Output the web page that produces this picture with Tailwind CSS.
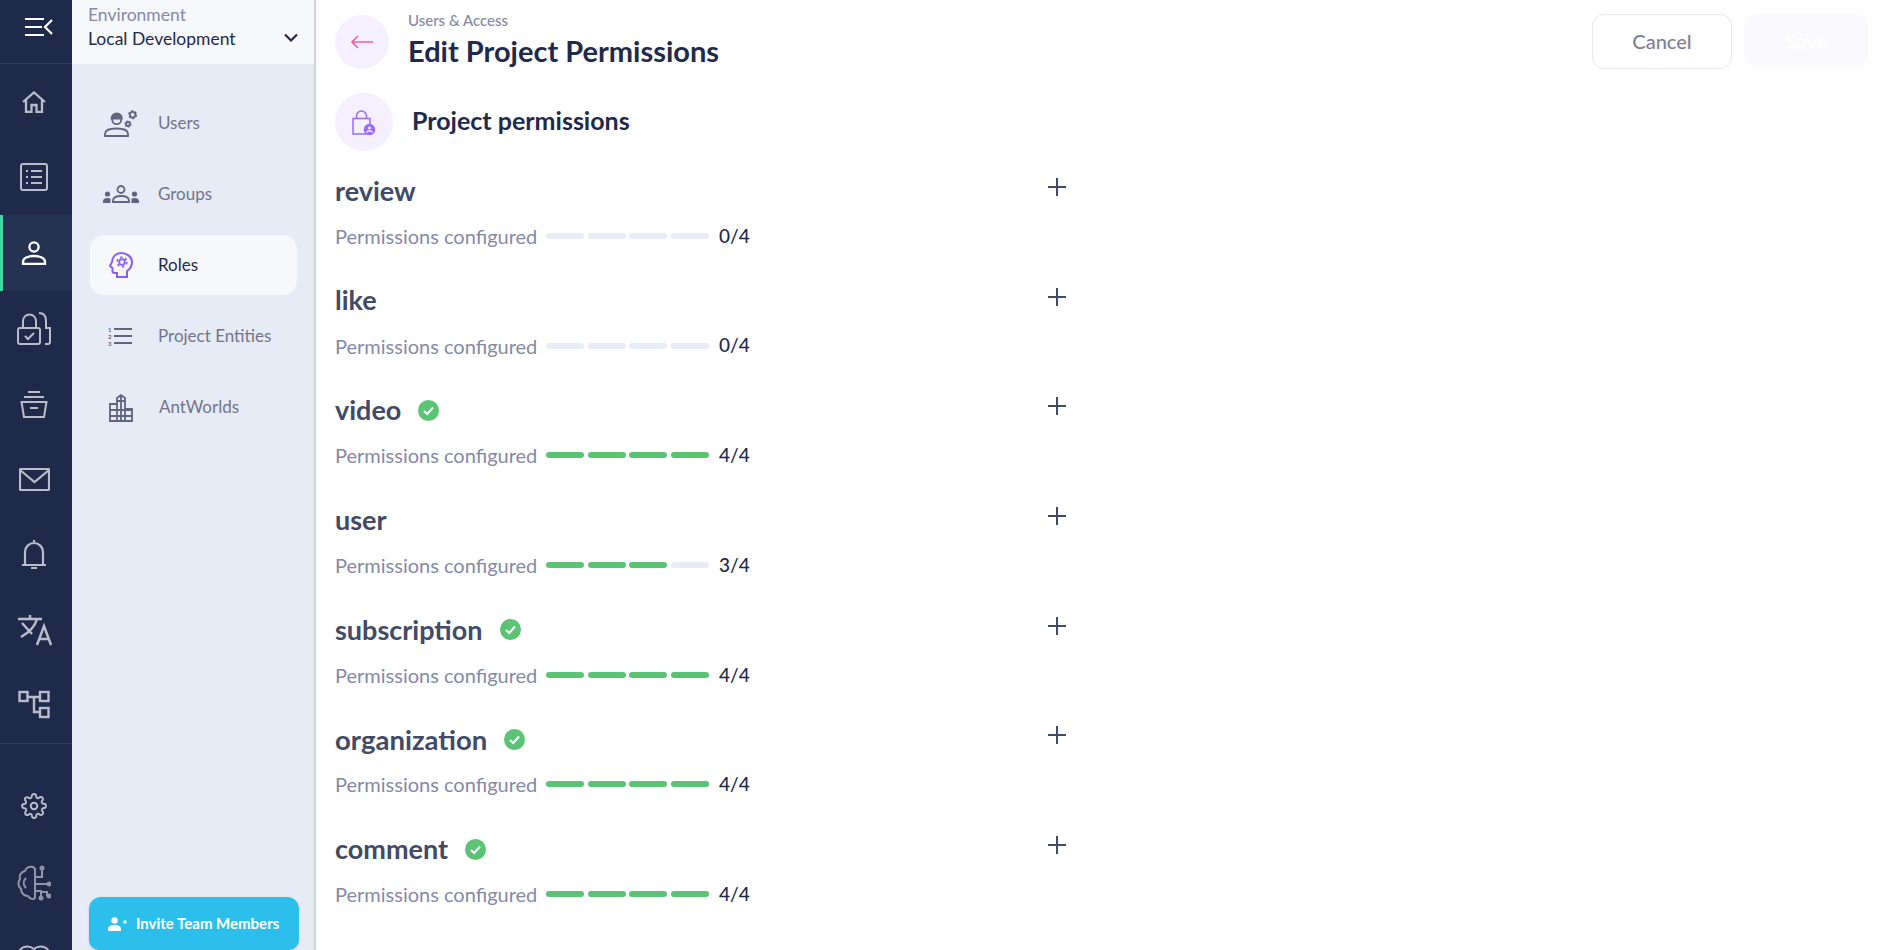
<!DOCTYPE html>
<html><head><meta charset="utf-8"><script src="https://cdn.jsdelivr.net/npm/@tailwindcss/browser@4"></script></head>
<body class="bg-white overflow-hidden">
<div class="flex h-[950px] w-[1886px] overflow-hidden font-['Lato','Noto_Sans',sans-serif] text-[#1f2a4a]">
  <!-- rail -->
  <aside class="w-[72px] shrink-0 h-full bg-[#1f2a4a] flex flex-col text-[#b9bdca] overflow-hidden">
    <div class="h-[64px] shrink-0 border-b border-[#323d5c] flex items-center justify-center text-white pr-[4px]">
      <svg class="w-[28px] h-[20px] translate-x-[5px] -translate-y-[5px]" viewBox="0 0 28 20" fill="none" stroke="currentColor" stroke-width="2.200"><path d="M0 2h19M0 10h17M0 18h19M27 3l-7 7 7 7"/></svg>
    </div>
    <div class="h-[75.5px] shrink-0 flex items-center justify-center pr-[4px]">
      <svg class="w-[24px] h-[22px]" viewBox="0 0 24 22" fill="none" stroke="currentColor" stroke-width="2.300"><path d="M1 11 12 1.500 23 11M4 9v12h5.500v-7h5v7H20V9"/></svg>
    </div>
    <div class="h-[75.5px] shrink-0 flex items-center justify-center pr-[4px]">
      <svg class="w-[28px] h-[28px]" viewBox="0 0 28 28" fill="none" stroke="currentColor" stroke-width="2"><rect x="1" y="1" width="26" height="26" rx="2"/><path d="M11 8h11M11 14h11M11 20h11M6 8h2M6 14h2M6 20h2"/></svg>
    </div>
    <div class="h-[76px] shrink-0 flex items-center justify-center bg-[#263252] border-l-[3px] border-[#3fd9a8] text-white pr-[7px]">
      <svg class="w-[26px] h-[24px]" viewBox="0 0 26 24" fill="none" stroke="currentColor" stroke-width="2.300"><circle cx="13" cy="6" r="4.600"/><path d="M2 23v-2c0-4 5-6 11-6s11 2 11 6v2z"/></svg>
    </div>
    <div class="h-[76px] shrink-0 flex items-center justify-center pr-[4px]">
      <svg class="w-[34px] h-[34px]" viewBox="0 0 34 34" fill="none" stroke="currentColor" stroke-width="2"><rect x="1" y="16" width="22" height="16" rx="2"/><path d="M6 16V9a6.500 6.500 0 0 1 13 0v7M22 1c5 0 7 3 7 8v7h4v14c0 1-1 2-2 2h-3M8 24l3 3 6-6"/></svg>
    </div>
    <div class="h-[75px] shrink-0 flex items-center justify-center pr-[4px]">
      <svg class="w-[28px] h-[28px]" viewBox="0 0 28 28" fill="none" stroke="currentColor" stroke-width="2"><path d="M8 1h12M4 6h20M1.500 11h25l-2.500 15H4zM10 17h8"/></svg>
    </div>
    <div class="h-[75px] shrink-0 flex items-center justify-center pr-[4px]">
      <svg class="w-[31px] h-[23px]" viewBox="0 0 31 23" fill="none" stroke="currentColor" stroke-width="2.200"><rect x="1" y="1" width="29" height="21" rx="1"/><path d="m1 2 14.500 12L30 2"/></svg>
    </div>
    <div class="h-[75px] shrink-0 flex items-center justify-center pr-[4px]">
      <svg class="w-[26px] h-[31px]" viewBox="0 0 26 31" fill="none" stroke="currentColor" stroke-width="2.200"><path d="M13 1v2M1 26h24M4 26V13a9 9 0 0 1 18 0v13M10 29h6"/></svg>
    </div>
    <div class="h-[75px] shrink-0 flex items-center justify-center pr-[4px]">
      <svg class="w-[35px] h-[32px]" viewBox="0 0 35 32" fill="none" stroke="currentColor" stroke-width="2.500"><path d="M1 5h24M13 1v4M5 9l10 11M20 5c-2 7-7 13-16 18"/><path d="M20 31 27 12l7 19M22.500 25h9"/></svg>
    </div>
    <div class="h-[75px] shrink-0 flex items-center justify-center pr-[4px]">
      <svg class="w-[32px] h-[29px]" viewBox="0 0 32 29" fill="none" stroke="currentColor" stroke-width="2.400"><rect x="1.500" y="2" width="8" height="9"/><rect x="22" y="2" width="8.500" height="9"/><rect x="22" y="18" width="8.500" height="9"/><path d="M10 7h12M16 7v15h6"/></svg>
    </div>
    <div class="h-[3px] shrink-0 border-b border-[#323d5c] -mt-[1px]"></div>
    <div class="h-[124px] shrink-0 flex items-center justify-center pr-[4px]">
      <svg class="w-[26px] h-[26px]" viewBox="0 0 24 24" fill="none" stroke="currentColor" stroke-width="1.800"><circle cx="12" cy="12" r="3"/><path d="M19.400 15a1.650 1.650 0 0 0 .33 1.820l.06.06a2 2 0 1 1-2.830 2.830l-.06-.06a1.650 1.650 0 0 0-2.820 1.170V21a2 2 0 0 1-4 0v-.09a1.650 1.650 0 0 0-2.820-1.170l-.06.06a2 2 0 1 1-2.830-2.830l.06-.06a1.650 1.650 0 0 0-1.170-2.820H3a2 2 0 0 1 0-4h.09a1.650 1.650 0 0 0 1.170-2.820l-.06-.06a2 2 0 1 1 2.830-2.830l.06.06a1.650 1.650 0 0 0 2.820-1.170V3a2 2 0 0 1 4 0v.09a1.650 1.650 0 0 0 2.820 1.170l.06-.06a2 2 0 1 1 2.830 2.830l-.06.06a1.650 1.650 0 0 0 1.170 2.820H21a2 2 0 0 1 0 4h-.09a1.650 1.650 0 0 0-1.510 1.090z"/></svg>
    </div>
    <div class="h-[30px] shrink-0 flex items-center justify-center pr-[4px]">
      <svg class="w-[34px] h-[36px] shrink-0" viewBox="0 0 34 36" fill="none" stroke="#8f94a6" stroke-width="2"><path d="M16 2c-4-1-7 1-8 4-4 1-6 4-5 8-2 3-2 7 1 10 0 4 3 7 7 7 2 3 5 4 7 2V4zM9 13c-3 3-3 7 0 10M18 12h7V5M18 19h13M18 26h6v6M25 27h5v4"/><circle cx="25" cy="3" r="1.500" fill="#8f94a6"/><circle cx="32" cy="19" r="1.500" fill="#8f94a6"/><circle cx="24" cy="33" r="1.500" fill="#8f94a6"/><circle cx="32" cy="31" r="1.500" fill="#8f94a6"/></svg>
    </div>
    <div class="flex-1 flex justify-center pt-[46px] pr-[4px]">
      <svg class="w-[32px] h-[20px]" viewBox="0 0 32 20" fill="none" stroke="#b9bdca" stroke-width="2"><path d="M1 8c2-6 10-7 15-3 5-4 13-3 15 3"/></svg>
    </div>
  </aside>

  <!-- secondary panel -->
  <nav class="relative w-[244px] shrink-0 h-full bg-[#e7ebf5] border-r-2 border-[#cfd4e2] flex flex-col">
    <div class="h-[64px] shrink-0 bg-[#f7f8fc] flex justify-between pl-[16px] pr-[15px]">
      <div>
        <div class="text-[17.5px] leading-[21px] pt-[4px] text-[#8589a8]">Environment</div>
        <div class="text-[17.500px] leading-[24px] mt-[2px] text-[#1f2a4a]">Local Development</div>
      </div>
      <svg class="w-[16px] h-[10px] mt-[33px]" viewBox="0 0 16 10" fill="none" stroke="#1f2a4a" stroke-width="2.200"><path d="m2 1.500 6 6 6-6"/></svg>
    </div>
    <ul class="flex flex-col pt-[29px] pl-[18px] pr-[17px] gap-[11px] text-[17px] text-[#70758d]">
      <li class="h-[60px] flex items-center">
        <svg class="ml-[14px] w-[33px] h-[27px] shrink-0" viewBox="0 0 33 27" fill="none" stroke="#5f6580" stroke-width="1.800"><circle cx="12.700" cy="9.700" r="4.500"/><path d="M7.500 8.500a5.200 5.200 0 0 1 10.400 0z" fill="#5f6580"/><path d="M1 26v-2c0-4 5-5.500 11.500-5.500S24 20 24 24v2z"/><circle cx="28.600" cy="4.700" r="2.800"/><circle cx="28.600" cy="4.700" r="3.800" stroke-dasharray="2 2" stroke-width="1.400"/><circle cx="24" cy="14" r="2"/><circle cx="24" cy="14" r="3" stroke-dasharray="1.600 1.500" stroke-width="1.200"/></svg>
        <span class="ml-[21px]">Users</span>
      </li>
      <li class="h-[60px] flex items-center">
        <svg class="ml-[13px] w-[36px] h-[18px] shrink-0" viewBox="0 0 36 18" fill="none" stroke="#5f6580" stroke-width="1.800"><circle cx="18" cy="4.500" r="3.500"/><path d="M10 17v-1c0-3 3-5 8-5s8 2 8 5v1z"/><circle cx="4.500" cy="9" r="2.600" fill="#5f6580" stroke="none"/><circle cx="31.500" cy="9" r="2.600" fill="#5f6580" stroke="none"/><path d="M0 18v-2c0-2 2-3 4.500-3l3 .6V18zM36 18v-2c0-2-2-3-4.500-3l-3 .6V18z" fill="#5f6580" stroke="none"/></svg>
        <span class="ml-[19px]">Groups</span>
      </li>
      <li class="h-[60px] flex items-center bg-[#f7f8fc] rounded-[14px] text-[#1f2a4a]">
        <svg class="ml-[19px] w-[24px] h-[26px] shrink-0" viewBox="0 0 24 26" fill="none" stroke="#8b5cf6" stroke-width="2"><path d="M8 25h10v-6c3-2 5-5 5-9C23 5 18 1 12 1 7 1 3 5 3 10l-2 4 2.500 2v3c0 1 1 2 2 2H8z"/><circle cx="13" cy="10" r="2.800" stroke-width="1.800"/><circle cx="13" cy="10" r="4.800" stroke-dasharray="2.500 2.530" stroke-width="1.600"/></svg>
        <span class="ml-[25px]">Roles</span>
      </li>
      <li class="h-[60px] flex items-center">
        <svg class="ml-[18px] w-[24px] h-[20px] shrink-0" viewBox="0 0 24 20" fill="none" stroke="#5f6580" stroke-width="2.200"><path d="M6 3h18M6 10h18M6 17h18"/><text x="0" y="6" font-size="6" fill="#5f6580" stroke="none" font-weight="700">1</text><text x="0" y="13" font-size="6" fill="#5f6580" stroke="none" font-weight="700">2</text><text x="0" y="20" font-size="6" fill="#5f6580" stroke="none" font-weight="700">3</text></svg>
        <span class="ml-[26px]">Project Entities</span>
      </li>
      <li class="h-[60px] flex items-center">
        <svg class="ml-[19px] w-[24px] h-[29px] shrink-0" viewBox="0 0 24 29" fill="none" stroke="#5f6580" stroke-width="1.800"><path d="M1 28V11h7V5l4-3 4 3v11h7v12zM8 11v17M16 16v12M1 17h22M1 23h22M12 2v26M8 8h8"/></svg>
        <span class="ml-[26px]">AntWorlds</span>
      </li>
    </ul>
    <button class="absolute left-[17px] bottom-0 w-[210px] h-[53px] rounded-t-[12px] rounded-b-[10px] bg-[#2dbfeb] text-white text-[15px] font-bold flex items-center shadow-sm">
      <svg class="ml-[19px] w-[19px] h-[14px]" viewBox="0 0 19 14" fill="white"><circle cx="6.500" cy="3.500" r="3.200"/><path d="M0 14v-2c0-3 3-4 6.500-4S13 9 13 12v2z"/><path d="M15 5h4M17 3v4" stroke="white" stroke-width="1.200"/></svg>
      <span class="ml-[9px] -mt-[1px]">Invite Team Members</span>
    </button>
  </nav>

  <!-- main -->
  <main class="flex-1 min-w-0 h-full relative flex flex-col pl-[19px]">
    <header class="h-[93px] shrink-0 flex items-start pt-[15px]">
      <div class="w-[54px] h-[54px] rounded-full bg-[#f4f0ff] flex items-center justify-center">
        <svg class="w-[22px] h-[14px]" viewBox="0 0 22 14" fill="none" stroke="#f45fa6" stroke-width="1.600"><path d="M22 7H1M7 1 1 7l6 6"/></svg>
      </div>
      <div class="ml-[19px]">
        <div class="text-[15px] leading-[16px] font-medium text-[#8589a8] -mt-[3px]">Users &amp; Access</div>
        <h1 class="text-[29px] leading-[36px] font-bold text-[#1f2a4a] mt-[5px]">Edit Project Permissions</h1>
      </div>
      <div class="ml-auto flex gap-[12px] mr-[18px] -mt-[1px]">
        <button class="w-[140px] h-[55px] rounded-[12px] border border-[#e6e8f5] text-[#7c8099] text-[20px] font-medium pb-[2px]">Cancel</button>
        <button class="w-[124px] h-[53px] rounded-[12px] bg-[#fafafd] text-white text-[20px] font-bold">Save</button>
      </div>
    </header>
    <div class="h-[58px] shrink-0 flex items-center">
      <div class="w-[58px] h-[58px] rounded-full bg-[#f4f0ff] flex items-center justify-center">
        <svg class="w-[24px] h-[25px]" viewBox="0 0 24 25" fill="none" stroke="#9b6bfa" stroke-width="1.500"><path d="M14 24H1V8.500h17V14M4.500 8.500V6a5 5 0 0 1 10 0v2.500"/><circle cx="17.500" cy="19.500" r="5" fill="#9b6bfa"/><circle cx="17.500" cy="18" r="1.500" fill="#f4f0ff" stroke="none"/><path d="M14.500 22.500c1-2 5-2 6 0" stroke="#f4f0ff" stroke-width="1.500"/></svg>
      </div>
      <h2 class="ml-[19px] -mt-[2px] text-[25px] font-bold text-[#1f2a4a]">Project permissions</h2>
    </div>
    <section class="w-[738px] mt-[22px] flex flex-col">
      <div class="h-[109.700px] flex justify-between items-start">
        <div>
          <div class="h-[36px] flex items-center gap-[17px]"><span class="text-[27px] font-bold text-[#414a66]">review</span></div>
          <div class="mt-[13px] flex items-center text-[20px] text-[#8589a8] h-[28px]"><span class="w-[211px]">Permissions configured</span>
            <span class="flex gap-[3.670px]"><i class="w-[38px] h-[6px] rounded-full bg-[#e9ecf6]"></i><i class="w-[38px] h-[6px] rounded-full bg-[#e9ecf6]"></i><i class="w-[38px] h-[6px] rounded-full bg-[#e9ecf6]"></i><i class="w-[38px] h-[6px] rounded-full bg-[#e9ecf6]"></i></span>
            <span class="ml-[10px] text-[19px] font-medium text-[#1f2a4a]">0/4</span></div>
        </div>
        <svg class="w-[18px] h-[18px] mr-[7px] mt-[5px]" viewBox="0 0 18 18" stroke="#414a66" stroke-width="2"><path d="M9 0v18M0 9h18"/></svg>
      </div>
      <div class="h-[109.700px] flex justify-between items-start">
        <div>
          <div class="h-[36px] flex items-center gap-[17px]"><span class="text-[27px] font-bold text-[#414a66]">like</span></div>
          <div class="mt-[13px] flex items-center text-[20px] text-[#8589a8] h-[28px]"><span class="w-[211px]">Permissions configured</span>
            <span class="flex gap-[3.670px]"><i class="w-[38px] h-[6px] rounded-full bg-[#e9ecf6]"></i><i class="w-[38px] h-[6px] rounded-full bg-[#e9ecf6]"></i><i class="w-[38px] h-[6px] rounded-full bg-[#e9ecf6]"></i><i class="w-[38px] h-[6px] rounded-full bg-[#e9ecf6]"></i></span>
            <span class="ml-[10px] text-[19px] font-medium text-[#1f2a4a]">0/4</span></div>
        </div>
        <svg class="w-[18px] h-[18px] mr-[7px] mt-[5px]" viewBox="0 0 18 18" stroke="#414a66" stroke-width="2"><path d="M9 0v18M0 9h18"/></svg>
      </div>
      <div class="h-[109.700px] flex justify-between items-start">
        <div>
          <div class="h-[36px] flex items-center gap-[17px]"><span class="text-[27px] font-bold text-[#414a66]">video</span>
            <svg class="w-[21px] h-[21px]" viewBox="0 0 21 21"><circle cx="10.500" cy="10.500" r="10.500" fill="#5bc474"/><path d="m6 11 3.200 3L15 7.500" fill="none" stroke="white" stroke-width="2"/></svg></div>
          <div class="mt-[13px] flex items-center text-[20px] text-[#8589a8] h-[28px]"><span class="w-[211px]">Permissions configured</span>
            <span class="flex gap-[3.670px]"><i class="w-[38px] h-[6px] rounded-full bg-[#5bc474]"></i><i class="w-[38px] h-[6px] rounded-full bg-[#5bc474]"></i><i class="w-[38px] h-[6px] rounded-full bg-[#5bc474]"></i><i class="w-[38px] h-[6px] rounded-full bg-[#5bc474]"></i></span>
            <span class="ml-[10px] text-[19px] font-medium text-[#1f2a4a]">4/4</span></div>
        </div>
        <svg class="w-[18px] h-[18px] mr-[7px] mt-[5px]" viewBox="0 0 18 18" stroke="#414a66" stroke-width="2"><path d="M9 0v18M0 9h18"/></svg>
      </div>
      <div class="h-[109.700px] flex justify-between items-start">
        <div>
          <div class="h-[36px] flex items-center gap-[17px]"><span class="text-[27px] font-bold text-[#414a66]">user</span></div>
          <div class="mt-[13px] flex items-center text-[20px] text-[#8589a8] h-[28px]"><span class="w-[211px]">Permissions configured</span>
            <span class="flex gap-[3.670px]"><i class="w-[38px] h-[6px] rounded-full bg-[#5bc474]"></i><i class="w-[38px] h-[6px] rounded-full bg-[#5bc474]"></i><i class="w-[38px] h-[6px] rounded-full bg-[#5bc474]"></i><i class="w-[38px] h-[6px] rounded-full bg-[#e9ecf6]"></i></span>
            <span class="ml-[10px] text-[19px] font-medium text-[#1f2a4a]">3/4</span></div>
        </div>
        <svg class="w-[18px] h-[18px] mr-[7px] mt-[5px]" viewBox="0 0 18 18" stroke="#414a66" stroke-width="2"><path d="M9 0v18M0 9h18"/></svg>
      </div>
      <div class="h-[109.700px] flex justify-between items-start">
        <div>
          <div class="h-[36px] flex items-center gap-[17px]"><span class="text-[27px] font-bold text-[#414a66]">subscription</span>
            <svg class="w-[21px] h-[21px]" viewBox="0 0 21 21"><circle cx="10.500" cy="10.500" r="10.500" fill="#5bc474"/><path d="m6 11 3.200 3L15 7.500" fill="none" stroke="white" stroke-width="2"/></svg></div>
          <div class="mt-[13px] flex items-center text-[20px] text-[#8589a8] h-[28px]"><span class="w-[211px]">Permissions configured</span>
            <span class="flex gap-[3.670px]"><i class="w-[38px] h-[6px] rounded-full bg-[#5bc474]"></i><i class="w-[38px] h-[6px] rounded-full bg-[#5bc474]"></i><i class="w-[38px] h-[6px] rounded-full bg-[#5bc474]"></i><i class="w-[38px] h-[6px] rounded-full bg-[#5bc474]"></i></span>
            <span class="ml-[10px] text-[19px] font-medium text-[#1f2a4a]">4/4</span></div>
        </div>
        <svg class="w-[18px] h-[18px] mr-[7px] mt-[5px]" viewBox="0 0 18 18" stroke="#414a66" stroke-width="2"><path d="M9 0v18M0 9h18"/></svg>
      </div>
      <div class="h-[109.700px] flex justify-between items-start">
        <div>
          <div class="h-[36px] flex items-center gap-[17px]"><span class="text-[27.500px] font-bold text-[#414a66]">organization</span>
            <svg class="w-[21px] h-[21px]" viewBox="0 0 21 21"><circle cx="10.500" cy="10.500" r="10.500" fill="#5bc474"/><path d="m6 11 3.200 3L15 7.500" fill="none" stroke="white" stroke-width="2"/></svg></div>
          <div class="mt-[13px] flex items-center text-[20px] text-[#8589a8] h-[28px]"><span class="w-[211px]">Permissions configured</span>
            <span class="flex gap-[3.670px]"><i class="w-[38px] h-[6px] rounded-full bg-[#5bc474]"></i><i class="w-[38px] h-[6px] rounded-full bg-[#5bc474]"></i><i class="w-[38px] h-[6px] rounded-full bg-[#5bc474]"></i><i class="w-[38px] h-[6px] rounded-full bg-[#5bc474]"></i></span>
            <span class="ml-[10px] text-[19px] font-medium text-[#1f2a4a]">4/4</span></div>
        </div>
        <svg class="w-[18px] h-[18px] mr-[7px] mt-[5px]" viewBox="0 0 18 18" stroke="#414a66" stroke-width="2"><path d="M9 0v18M0 9h18"/></svg>
      </div>
      <div class="h-[109.700px] flex justify-between items-start">
        <div>
          <div class="h-[36px] flex items-center gap-[17px]"><span class="text-[27px] font-bold text-[#414a66]">comment</span>
            <svg class="w-[21px] h-[21px]" viewBox="0 0 21 21"><circle cx="10.500" cy="10.500" r="10.500" fill="#5bc474"/><path d="m6 11 3.200 3L15 7.500" fill="none" stroke="white" stroke-width="2"/></svg></div>
          <div class="mt-[13px] flex items-center text-[20px] text-[#8589a8] h-[28px]"><span class="w-[211px]">Permissions configured</span>
            <span class="flex gap-[3.670px]"><i class="w-[38px] h-[6px] rounded-full bg-[#5bc474]"></i><i class="w-[38px] h-[6px] rounded-full bg-[#5bc474]"></i><i class="w-[38px] h-[6px] rounded-full bg-[#5bc474]"></i><i class="w-[38px] h-[6px] rounded-full bg-[#5bc474]"></i></span>
            <span class="ml-[10px] text-[19px] font-medium text-[#1f2a4a]">4/4</span></div>
        </div>
        <svg class="w-[18px] h-[18px] mr-[7px] mt-[5px]" viewBox="0 0 18 18" stroke="#414a66" stroke-width="2"><path d="M9 0v18M0 9h18"/></svg>
      </div>
    </section>
  </main>
</div>
</body></html>
